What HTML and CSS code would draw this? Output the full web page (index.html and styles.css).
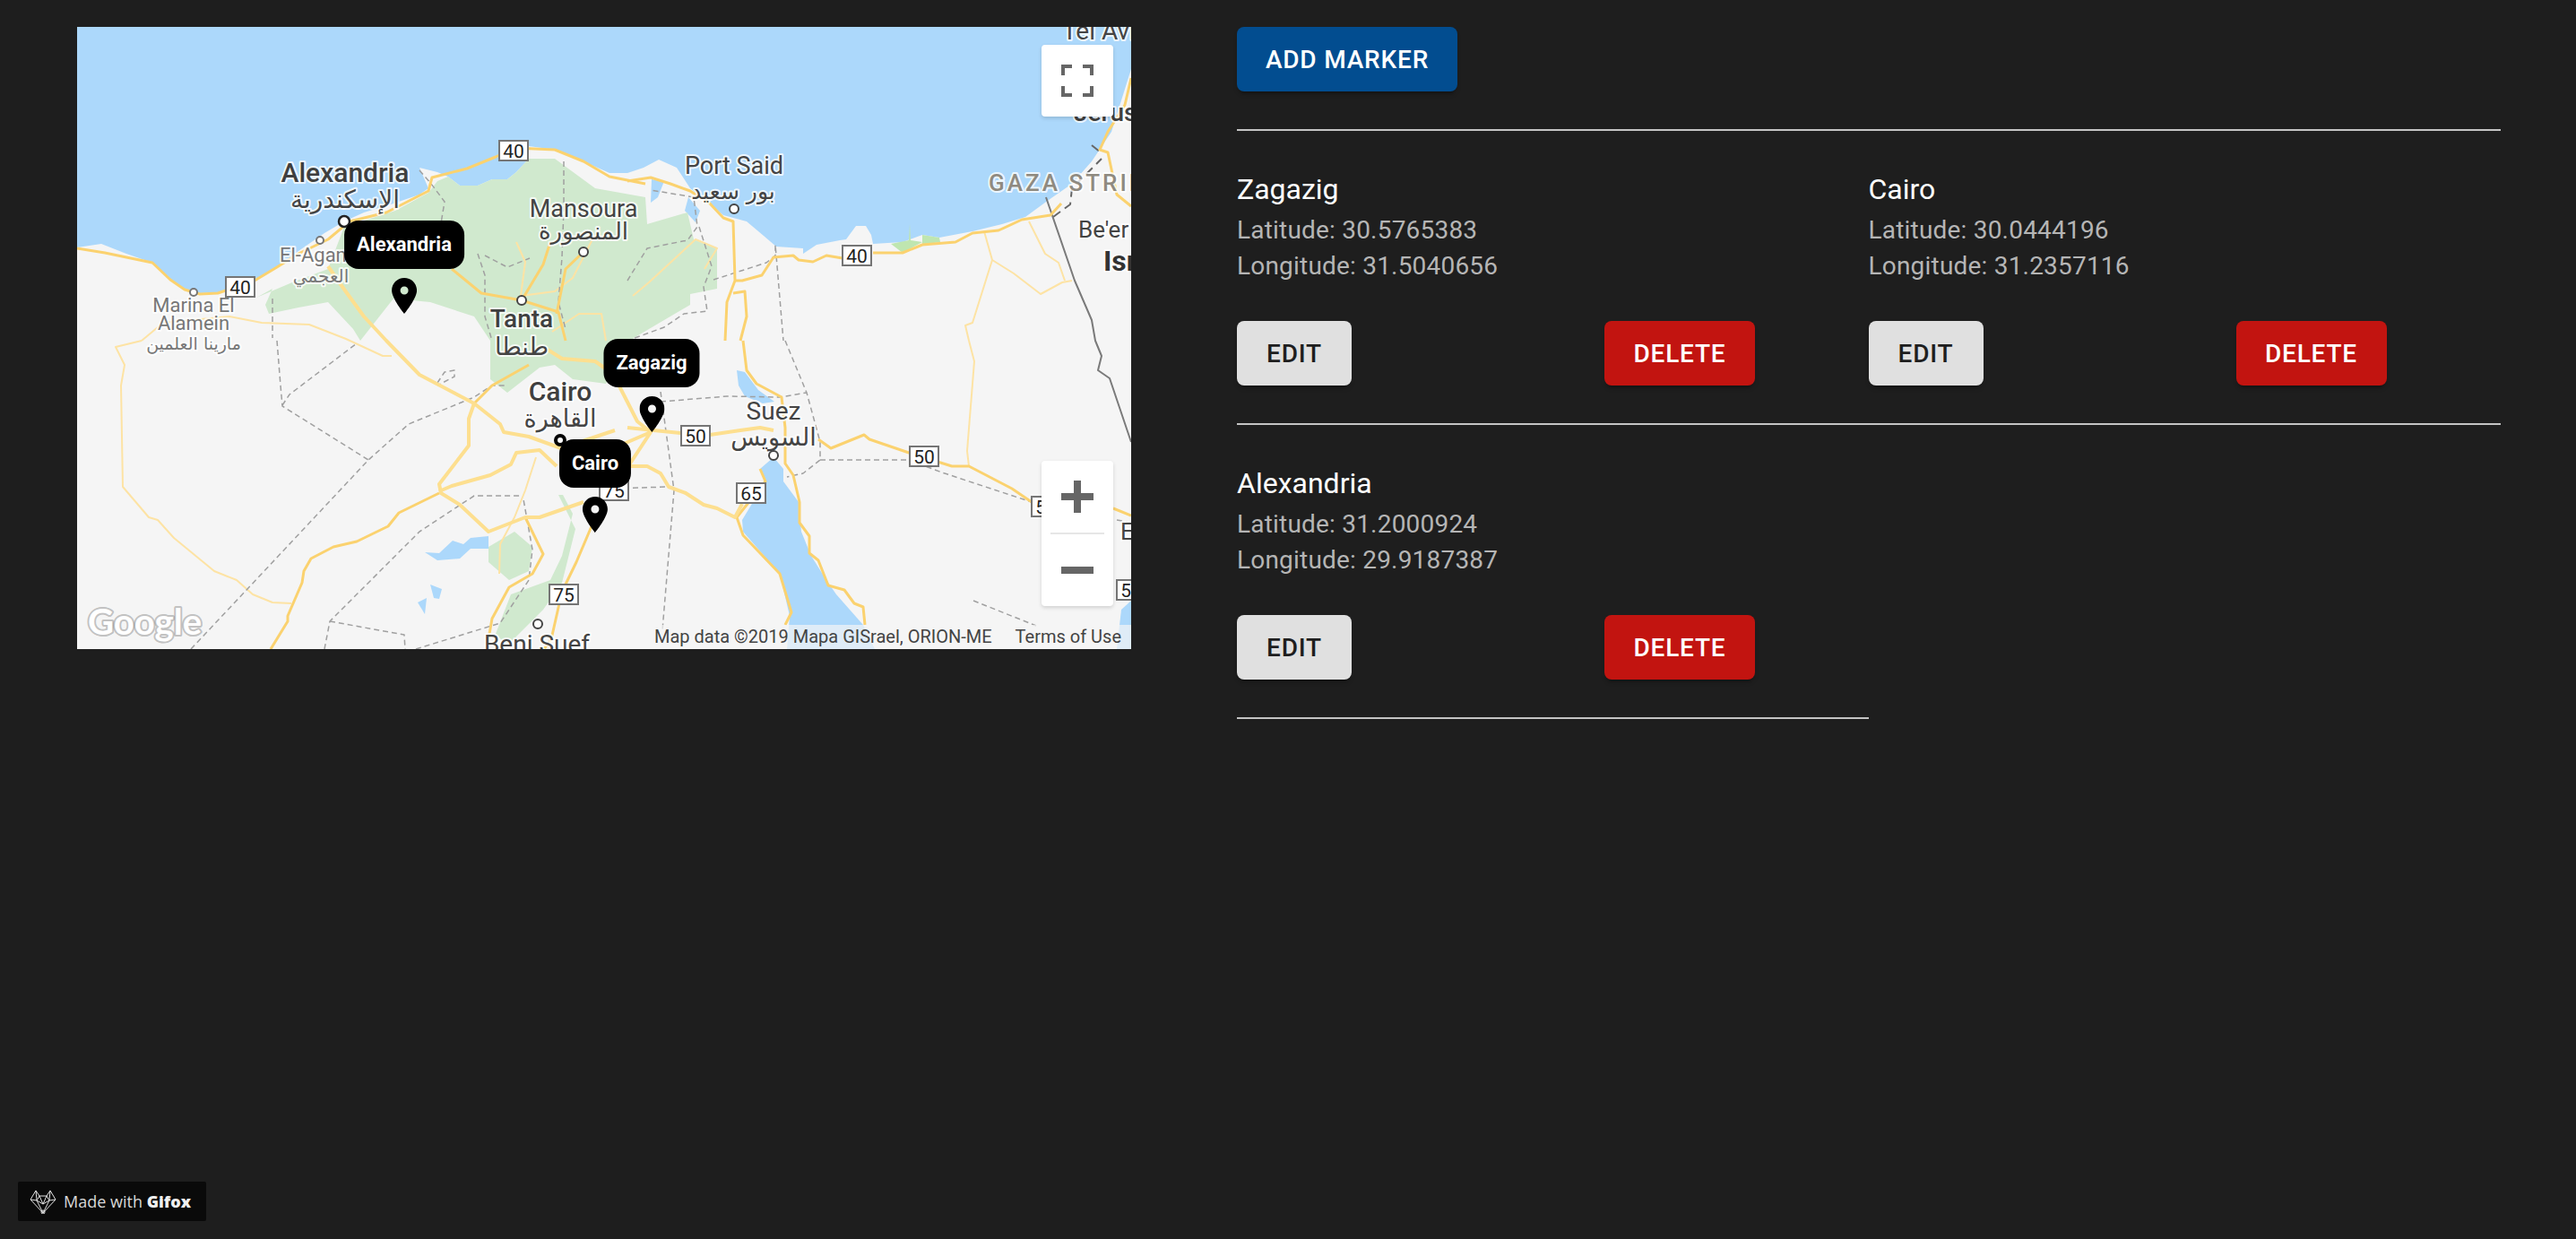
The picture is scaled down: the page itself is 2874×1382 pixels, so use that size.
FILE: index.html
```html
<!DOCTYPE html>
<html lang="en">
<head>
    <meta charset="UTF-8">
    <meta name="viewport" content="width=device-width, initial-scale=1.0">
    <title>Markers</title>
    <link rel="stylesheet" href="styles.css">
</head>
<body>
    <div class="page">
        <div class="map">
            <svg class="map-canvas" viewBox="0 0 1176 694" width="1176" height="694">
                <rect class="land" width="1176" height="694"/>

                <!-- sea -->
                <polygon class="water" points="0,0 1176,0 1176,47 1154,117 1132,150 1110,175 1084,193 1058,212 1032,220 999,228 962,235 943,232 921,240 888,242 886,232 880,222 869,222 858,237 851,238 825,243 810,253 810,247 780,245 766,233 747,217 732,213 721,210 706,197 684,180 669,157 649,148 632,157 614,163 594,163 565,150 533,137 504,133 504,147 490,162 480,170 463,170 447,177 427,177 414,167 402,162 382,157 392,180 382,187 353,197 320,207 298,217 276,230 247,250 223,268 198,282 157,296 137,297 120,292 104,283 84,263 55,253 27,242 0,246"/>
                <polygon class="water" points="777,480 762,493 768,507 742,550 743,563 784,610 795,657 792,694 890,694 877,667 847,633 836,617 819,590 808,563 805,530 788,507 788,493"/>
                <polygon class="water" points="736,383 745,385 760,405 778,418 765,420 745,412 738,400"/>
                <polygon class="water" points="1165,650 1176,640 1176,694 1160,694"/>
                <polygon class="water" points="388,586 402,595 427,593 439,582 459,582 459,568 439,570 431,577 419,573 404,587"/>
                <polygon class="water" points="394,622 407,627 404,638 398,637"/>
                <polygon class="water" points="380,642 390,637 388,655"/>
                <polygon class="water" points="641,170 655,172 648,190 640,196"/>
                <polygon class="water" points="682,190 695,205 690,218 678,205"/>

                <!-- parks -->
                <polygon class="park" points="200,302 218,292 210,310 214,320 247,313 280,307 308,337 316,350 353,303 394,307 443,323 461,350 461,393 480,408 516,380 533,377 553,393 590,398 621,347 684,310 684,298 714,292 714,247 688,237 681,207 636,220 634,190 578,180 533,147 504,147 490,162 480,170 463,170 447,177 427,177 414,167 402,172 392,185 355,205 298,223 280,270 240,285"/>
                <polygon class="park" points="537,522 542,522 553,543 541,590 528,617 484,633 467,677 480,690 520,650 541,620 556,560"/>
                <polygon class="park" points="459,580 488,563 508,580 504,607 482,617 459,597"/>
                <polygon class="park-light" points="908,242 928,238 929,220 930,238 943,240 921,252"/>
                <polygon class="park-light" points="943,232 962,235 963,240 943,243"/>

                <!-- thin roads -->
                <g class="road-thin">
                    <polyline points="72,350 43,357 53,377 49,400 51,513 80,547 90,550 108,570 153,607 178,617 196,633 218,642 239,643"/>
                    <polyline points="72,350 96,330 170,323 206,330 259,332 300,348 341,367 351,367"/>
                    <polyline points="995,350 1001,373 993,473 995,490"/>
                    <polyline points="1012,228 1021,260 1045,275 1075,298 1099,285 1110,283"/>
                    <polyline points="1021,260 999,330 991,333 995,350"/>
                    <polyline points="1062,217 1080,253 1095,263 1102,283"/>
                    <polyline points="512,480 500,517 488,547 472,577 471,610"/>
                    <polyline points="490,240 500,262 495,300 533,295 553,280 575,237"/>
                    <polyline points="620,300 638,285 690,237 714,247 700,270"/>
                    <polyline points="530,340 560,320 585,320 590,350"/>
                </g>

                <!-- boundaries -->
                <g class="boundary">
                    <polyline points="223,350 227,400 229,423 325,483"/>
                    <polyline points="127,694 190,627 325,483 370,443 443,413 463,400 480,400"/>
                    <polyline points="229,422 237,410 312,353"/>
                    <polyline points="276,694 282,663 382,563 443,523 496,523"/>
                    <polyline points="282,663 365,678 366,694"/>
                    <polyline points="378,694 472,665 504,617 508,583 498,527"/>
                    <polyline points="402,397 410,385 421,383 421,390 402,400"/>
                    <polyline points="218,303 218,347"/>
                    <polyline points="447,253 455,277 455,323 463,350"/>
                    <polyline points="543,150 543,203 541,257 537,307 545,337"/>
                    <polyline points="382,160 395,175 410,195 405,225"/>
                    <polyline points="455,255 480,268 505,258"/>
                    <polyline points="614,283 636,247 681,238 692,223 688,190 640,182"/>
                    <polyline points="694,223 708,267 699,290 703,317 677,320 655,335 614,350"/>
                    <polyline points="710,282 769,263 779,255 779,243 788,350"/>
                    <polyline points="790,350 814,408 829,463 829,483 810,498 792,502"/>
                    <polyline points="651,418 725,412 784,413 814,408"/>
                    <polyline points="651,407 666,517 653,673"/>
                    <polyline points="600,515 658,513"/>
                    <polyline points="829,483 928,483 965,497 1065,530"/>
                    <polyline points="1000,640 1070,668"/>
                    <polyline points="1160,550 1176,553"/>
                </g>
                <polyline class="boundary-dark" points="1089,212 1108,198 1110,180 1143,147"/>
                <polyline class="boundary-dark" points="1132,132 1142,140"/>
                <polyline class="border-line" points="1081,190 1113,283 1132,327 1136,350 1143,367 1139,383 1152,392 1176,463"/>

                <!-- main roads -->
                <g class="road">
                    <polyline points="0,247 31,252 84,263 104,282 120,293 137,298 157,297 198,283 223,268 247,253 280,237 304,217 345,207 392,183 396,168 435,158 467,145 488,135 533,137 565,150 594,167 634,175"/>
                    <polyline points="614,172 640,168 662,175 684,183 706,197 721,213 732,217 734,283 725,307 723,350"/>
                    <polyline points="732,297 745,295 747,323 740,350"/>
                    <polyline points="734,283 742,283 764,277 777,257 799,255 805,260 821,262 836,255 854,258"/>
                    <polyline points="888,252 921,252 943,243 980,240 999,230 1028,227 1054,215 1086,210 1098,197"/>
                    <polyline points="404,520 359,542 347,557 312,574 286,580 261,593 253,607 251,620 235,657 235,663 216,694"/>
                    <polyline points="743,350 747,383 758,398 786,413 790,447 790,487 799,500 806,530 806,553 817,568 817,587 827,595 838,623 856,628 867,643 877,647 879,667"/>
                    <polyline points="762,493 768,507 736,547 743,567 784,610 797,653 790,667"/>
                    <polyline points="827,460 841,470 878,455 884,460 928,475 976,490 995,490 1043,515 1065,530"/>
                    <polyline points="1156,537 1176,545"/>
                    <polyline points="1176,57 1169,87 1150,117 1141,137 1150,140 1160,187 1176,200"/>
                    <polyline points="574,557 557,597 541,630 529,683 521,694"/>
                    <polyline points="500,547 520,588 508,610 482,625 463,660 457,694"/>
                    <polyline points="418,270 451,297 496,305 537,318 545,350"/>
                    <polyline points="504,377 463,400 443,420"/>
                    <polyline points="496,305 520,265 528,240"/>
                    <polyline points="565,251 545,270 535,320"/>
                </g>
                <g class="road-wide">
                    <polyline points="280,267 296,290 320,323 345,350 382,388 443,420 472,443 476,452 504,457 540,470 600,450"/>
                    <polyline points="443,420 437,437 437,467 404,510 406,520 427,533 459,563 500,547 516,547 565,530"/>
                    <polyline points="404,518 418,512 461,500 484,488 490,475 516,472 535,490"/>
                    <polyline points="525,360 541,370 578,373 598,387 625,440 640,452"/>
                    <polyline points="614,447 673,453 706,455 740,450 762,447 777,450"/>
                    <polyline points="614,490 636,490 651,498 660,513 679,520 699,533 714,537 734,547 742,532"/>
                    <polyline points="540,470 575,480 640,452 615,490 612,520"/>
                </g>

                <!-- place names -->
                <text class="city" x="299" y="173" font-size="30">Alexandria</text>
                <text class="arabic" x="299" y="202" font-size="28">الإسكندرية</text>
                <text class="town" x="565" y="212" font-size="27">Mansoura</text>
                <text class="arabic" x="565" y="237" font-size="26">المنصورة</text>
                <text class="city" x="496" y="335" font-size="28">Tanta</text>
                <text class="arabic" x="496" y="366" font-size="27">طنطا</text>
                <text class="small-town start" x="226" y="262" font-size="22">El-Agami</text>
                <text class="arabic muted" x="272" y="285" font-size="20">العجمي</text>
                <text class="small-town" x="130" y="318" font-size="22">Marina El</text>
                <text class="small-town" x="130" y="338" font-size="22">Alamein</text>
                <text class="arabic muted" x="130" y="360" font-size="19">مارينا العلمين</text>
                <text class="town" x="733" y="164" font-size="27">Port Said</text>
                <text class="arabic" x="732" y="192" font-size="25">بور سعيد</text>
                <text class="region start" x="1017" y="183" font-size="26">GAZA STRIP</text>
                <text class="town start" x="1099" y="14" font-size="28">Tel Aviv</text>
                <text class="city start" x="1112" y="105" font-size="28">Jerusalem</text>
                <text class="town start" x="1117" y="235" font-size="26">Be'er Sheva</text>
                <text class="country start" x="1145" y="272" font-size="32">Israel</text>
                <text class="city" x="539" y="417" font-size="30">Cairo</text>
                <text class="arabic" x="539" y="446" font-size="27">القاهرة</text>
                <text class="town" x="777" y="438" font-size="28">Suez</text>
                <text class="arabic" x="777" y="467" font-size="27">السويس</text>
                <text class="town" x="513" y="698" font-size="28">Beni Suef</text>
                <text class="town start" x="1164" y="572" font-size="26">El</text>

                <!-- city dots -->
                <circle class="dot" cx="298" cy="217" r="6"/>
                <circle class="dot-small" cx="271" cy="238" r="4"/>
                <circle class="dot-small" cx="130" cy="296" r="4"/>
                <circle class="dot-town" cx="565" cy="251" r="5"/>
                <circle class="dot-town" cx="496" cy="305" r="5"/>
                <circle class="dot-town" cx="733" cy="203" r="5"/>
                <circle class="dot-capital" cx="539" cy="461" r="5"/>
                <circle class="dot-town" cx="777" cy="478" r="5"/>
                <circle class="dot-town" cx="514" cy="666" r="5"/>

                <!-- road shields -->
                <g class="shield"><rect x="471" y="127" width="32" height="22"/><text x="487" y="146">40</text></g>
                <g class="shield"><rect x="166" y="279" width="32" height="22"/><text x="182" y="298">40</text></g>
                <g class="shield"><rect x="854" y="244" width="32" height="22"/><text x="870" y="263">40</text></g>
                <g class="shield"><rect x="527" y="622" width="32" height="22"/><text x="543" y="641">75</text></g>
                <g class="shield"><rect x="583" y="506" width="32" height="22"/><text x="599" y="525">75</text></g>
                <g class="shield"><rect x="674" y="445" width="32" height="22"/><text x="690" y="464">50</text></g>
                <g class="shield"><rect x="929" y="468" width="32" height="22"/><text x="945" y="487">50</text></g>
                <g class="shield"><rect x="1065" y="524" width="32" height="22"/><text x="1081" y="543">50</text></g>
                <g class="shield"><rect x="1160" y="617" width="32" height="22"/><text x="1176" y="636">50</text></g>
                <g class="shield"><rect x="736" y="509" width="32" height="22"/><text x="752" y="528">65</text></g>

                <text class="logo" x="12" y="678" font-size="40">Google</text>
            </svg>

            <div class="pin pin-alexandria">
                <span class="pin-label">Alexandria</span>
                <svg class="pin-icon" viewBox="0 0 28 40" width="28" height="40"><path fill-rule="evenodd" d="M14 0C6 0 0 6.3 0 14c0 9 14 26 14 26s14-17 14-26C28 6.3 22 0 14 0zM14 9.5a4.5 4.5 0 1 1 0 9a4.5 4.5 0 1 1 0-9z"/></svg>
            </div>
            <div class="pin pin-zagazig">
                <span class="pin-label">Zagazig</span>
                <svg class="pin-icon" viewBox="0 0 28 40" width="28" height="40"><path fill-rule="evenodd" d="M14 0C6 0 0 6.3 0 14c0 9 14 26 14 26s14-17 14-26C28 6.3 22 0 14 0zM14 9.5a4.5 4.5 0 1 1 0 9a4.5 4.5 0 1 1 0-9z"/></svg>
            </div>
            <div class="pin pin-cairo">
                <span class="pin-label">Cairo</span>
                <svg class="pin-icon" viewBox="0 0 28 40" width="28" height="40"><path fill-rule="evenodd" d="M14 0C6 0 0 6.3 0 14c0 9 14 26 14 26s14-17 14-26C28 6.3 22 0 14 0zM14 9.5a4.5 4.5 0 1 1 0 9a4.5 4.5 0 1 1 0-9z"/></svg>
            </div>

            <div class="map-control fullscreen">
                <svg viewBox="0 0 36 36" width="36" height="36"><path d="M0 0h12v4H4v8H0zM24 0h12v12h-4V4h-8zM0 24h4v8h8v4H0zM32 24h4v12H24v-4h8z"/></svg>
            </div>
            <div class="map-control zoom">
                <div class="zoom-button">
                    <svg viewBox="0 0 36 36" width="36" height="36"><path d="M14 0h8v14h14v8H22v14h-8V22H0v-8h14z"/></svg>
                </div>
                <div class="zoom-sep"></div>
                <div class="zoom-button">
                    <svg viewBox="0 0 36 36" width="36" height="36"><path d="M0 14h36v8H0z"/></svg>
                </div>
            </div>
            <div class="attribution">
                <span>Map data ©2019 Mapa GISrael, ORION-ME</span>
                <span>Terms of Use</span>
            </div>
        </div>

        <div class="panel">
            <button class="btn btn-primary">Add Marker</button>
            <hr class="rule">
            <div class="marker-list">
                <div class="marker-card">
                    <div class="marker-name">Zagazig</div>
                    <div class="marker-coord">Latitude: 30.5765383</div>
                    <div class="marker-coord">Longitude: 31.5040656</div>
                    <div class="marker-actions">
                        <button class="btn btn-default">Edit</button>
                        <button class="btn btn-danger">Delete</button>
                    </div>
                </div>
                <div class="marker-card">
                    <div class="marker-name">Cairo</div>
                    <div class="marker-coord">Latitude: 30.0444196</div>
                    <div class="marker-coord">Longitude: 31.2357116</div>
                    <div class="marker-actions">
                        <button class="btn btn-default">Edit</button>
                        <button class="btn btn-danger">Delete</button>
                    </div>
                </div>
                <div class="marker-card">
                    <div class="marker-name">Alexandria</div>
                    <div class="marker-coord">Latitude: 31.2000924</div>
                    <div class="marker-coord">Longitude: 29.9187387</div>
                    <div class="marker-actions">
                        <button class="btn btn-default">Edit</button>
                        <button class="btn btn-danger">Delete</button>
                    </div>
                </div>
            </div>
        </div>
    </div>

    <div class="gifox">
        <svg class="gifox-icon" viewBox="0 0 30 27" width="30" height="27">
            <path d="M1 11L7 1l4 6h8l4-6 6 10-14 15zM7 1l1 11 7 14 7-14 1-11M1 11l7 1 3-5 4 9 4-9 3 5 7-1M8 12l7 4 7-4"/>
            <circle cx="15" cy="25" r="2"/>
        </svg>
        <span>Made with <b>Gifox</b></span>
    </div>
</body>
</html>
```

FILE: styles.css
```css
:root {
    --bg-color: #1e1e1e;
    --rule-color: #c4c4c4;
    --road-color: #fbd26f;
    --control-grey: #666;
}

body {
    margin: 0;
    background-color: var(--bg-color);
    font-family: "Roboto", sans-serif;
    min-height: 100vh;
}

.page {
    display: flex;
    align-items: flex-start;
    gap: 118px;
    padding: 30px 0 0 86px;
}

/* map */
.map {
    position: relative;
    flex: none;
    width: 1176px;
    height: 694px;
    overflow: hidden;
}

.map-canvas {
    display: block;
}

.map-canvas text {
    font-family: "Roboto", sans-serif;
    text-anchor: middle;
    paint-order: stroke;
    stroke: rgba(255, 255, 255, 0.8);
    stroke-width: 4px;
    stroke-linejoin: round;
}

.land { fill: #f5f5f5; }
.water { fill: #acd8fb; }
.park { fill: #d0e9ce; }
.park-light { fill: #bfe6b0; }

.road polyline,
.road-wide polyline,
.road-thin polyline,
.boundary polyline,
.boundary-dark,
.border-line {
    fill: none;
    stroke-linejoin: round;
}

.road polyline { stroke: var(--road-color); stroke-width: 3px; }
.road-wide polyline { stroke: #fddf8f; stroke-width: 4px; }
.road-thin polyline { stroke: #fde3a4; stroke-width: 2px; }
.boundary polyline { stroke: #a0a0a0; stroke-width: 1.5px; stroke-dasharray: 6 4; }
.boundary-dark { stroke: #666; stroke-width: 2px; stroke-dasharray: 10 6; }
.border-line { stroke: #7a7a7a; stroke-width: 2px; }

.map-canvas .city { fill: #3f3f3f; font-weight: 500; }
.map-canvas .town { fill: #444; }
.map-canvas .small-town { fill: #777; }
.map-canvas .country { fill: #333; font-weight: 700; }
.map-canvas .region { fill: #8f8a80; letter-spacing: 3px; font-weight: 500; }
.map-canvas .start { text-anchor: start; }
.map-canvas .arabic { fill: #444; font-family: "DejaVu Sans", sans-serif; }
.map-canvas .muted { fill: #777; }

.dot { fill: #fff; stroke: #222; stroke-width: 2.5px; }
.dot-small { fill: #fff; stroke: #777; stroke-width: 2px; }
.dot-town { fill: #fff; stroke: #444; stroke-width: 2px; }
.dot-capital { fill: #fff; stroke: #000; stroke-width: 4px; }

.shield rect { fill: #fff; stroke: #757575; stroke-width: 2px; }
.map-canvas .shield text {
    fill: #222;
    font-size: 21px;
    stroke: none;
}

.map-canvas .logo {
    text-anchor: start;
    fill: #fff;
    font-family: "Lato", sans-serif;
    font-weight: 700;
    stroke: rgba(110, 110, 110, 0.4);
    stroke-width: 4px;
}

/* pins */
.pin {
    position: absolute;
    display: flex;
    flex-direction: column;
    align-items: center;
    gap: 10px;
    transform: translateX(-50%);
}

.pin-alexandria { left: 365px; top: 216px; }
.pin-zagazig { left: 641px; top: 348px; }
.pin-cairo { left: 578px; top: 460px; }

.pin-label {
    background-color: #000;
    color: #fff;
    font-size: 22px;
    font-weight: 700;
    line-height: 54px;
    padding: 0 14px;
    border-radius: 16px;
}

.pin-icon {
    display: block;
}

/* map controls */
.map-control {
    position: absolute;
    right: 20px;
    width: 80px;
    background-color: #fff;
    border-radius: 4px;
    box-shadow: 0 2px 4px rgba(0, 0, 0, 0.15);
}

.map-control svg {
    display: block;
    fill: var(--control-grey);
}

.fullscreen {
    top: 20px;
    height: 80px;
    display: flex;
    align-items: center;
    justify-content: center;
}

.zoom {
    top: 484px;
    height: 162px;
}

.zoom-button {
    height: 80px;
    display: flex;
    align-items: center;
    justify-content: center;
}

.zoom-sep {
    height: 2px;
    margin: 0 10px;
    background-color: #e6e6e6;
}

.attribution {
    position: absolute;
    right: 0;
    bottom: 0;
    display: flex;
    gap: 26px;
    padding: 0 11px 0 4px;
    height: 27px;
    line-height: 27px;
    font-size: 20px;
    color: #444;
    background-color: rgba(245, 245, 245, 0.7);
}

/* right panel */
.panel {
    width: 1410px;
}

.btn {
    height: 72px;
    border: none;
    border-radius: 8px;
    font-family: "Roboto", sans-serif;
    font-size: 28px;
    font-weight: 500;
    letter-spacing: 0.8px;
    text-transform: uppercase;
    box-shadow: 0 6px 2px -4px rgba(0, 0, 0, 0.2), 0 4px 4px rgba(0, 0, 0, 0.14);
    cursor: pointer;
}

.btn-primary {
    display: block;
    width: 246px;
    background-color: #024d90;
    color: #fff;
}

.btn-default {
    width: 128px;
    background-color: #e0e0e0;
    color: #1e1e1e;
}

.btn-danger {
    width: 168px;
    background-color: #c21410;
    color: #fff;
}

.rule {
    height: 2px;
    margin: 42px 0 0;
    border: none;
    background-color: var(--rule-color);
}

.marker-list {
    display: grid;
    grid-template-columns: 704.5px 705.5px;
}

.marker-card {
    padding: 45px 0 42px;
    border-bottom: 2px solid var(--rule-color);
}

.marker-name {
    color: #fff;
    font-size: 32px;
    line-height: 40px;
    margin-bottom: 6px;
}

.marker-coord {
    color: #b5b5b5;
    font-size: 28px;
    line-height: 40px;
    letter-spacing: 0.2px;
}

.marker-actions {
    display: flex;
    justify-content: space-between;
    width: 578px;
    margin-top: 41px;
}

/* watermark */
.gifox {
    position: fixed;
    left: 20px;
    bottom: 20px;
    display: flex;
    align-items: center;
    gap: 8px;
    width: 210px;
    height: 44px;
    box-sizing: border-box;
    padding-left: 13px;
    border-radius: 2px;
    background-color: #0a0a0a;
    color: #d8d8d8;
    font-family: "Open Sans", sans-serif;
    font-size: 18px;
}

.gifox b {
    color: #f0f0f0;
    font-weight: 800;
}

.gifox-icon {
    flex: none;
    fill: none;
    stroke: #e0e0e0;
    stroke-width: 1;
}
```
